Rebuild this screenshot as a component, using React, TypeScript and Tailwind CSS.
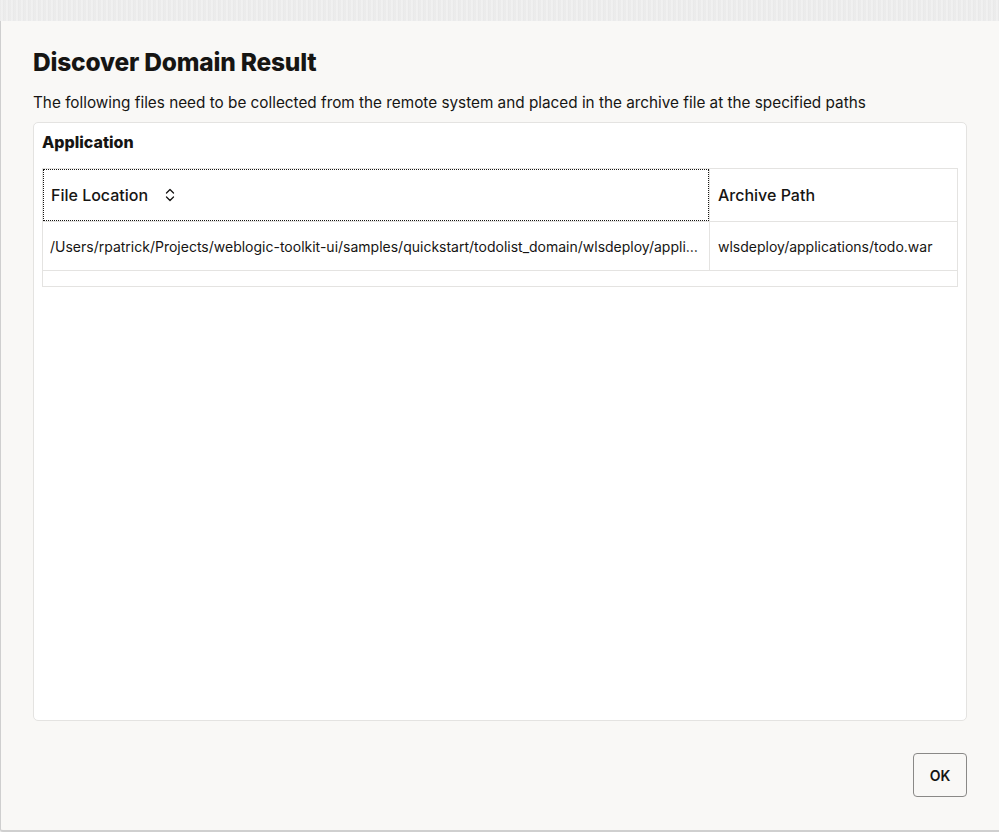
const font = "font-['Inter',_'Liberation_Sans',_sans-serif]";

function SortIcon() {
	return (
		<svg width="12" height="16" viewBox="0 0 12 16" fill="none" className="ml-[16px]">
			<path d="M2.5 6 L6 2.5 L9.5 6" stroke="#161513" strokeWidth="1.3" strokeLinecap="round" strokeLinejoin="round" />
			<path d="M2.5 10 L6 13.5 L9.5 10" stroke="#161513" strokeWidth="1.3" strokeLinecap="round" strokeLinejoin="round" />
		</svg>
	);
}

export default function App() {
	return (
		<div className={`${font} w-[999px] h-[832px] flex flex-col bg-[#ececec] text-[#161513]`}>
			<div className="h-[21px] shrink-0 bg-[repeating-linear-gradient(90deg,#e9e9e9_0px,#f3f3f3_2px,#e6e6e6_4px,#f1f1f1_5px)]" />
			<div className="flex-1 flex flex-col bg-[#f9f8f6] border-l border-b-2 border-[#cfcfcf] rounded-bl-[3px] pl-[32px] pr-[32px] pb-[33px]">
				<h1 className="mt-[26px] text-[24.5px] leading-[30px] font-extrabold tracking-[-0.2px]">
					Discover Domain Result
				</h1>
				<p className="mt-[14px] mb-[7px] text-[15.3px] leading-[24px]">
					The following files need to be collected from the remote system and placed in the archive file at the specified paths
				</p>
				<div className="h-[599px] bg-white border border-[#e4e3e1] rounded-[5px] px-[8px] pt-[8px]">
					<div className="text-[16px] leading-[22px] font-extrabold">Application</div>
					<div className="mt-[15px] border border-[#e4e3e1]">
						<div className="flex h-[53px] border-b border-[#e4e3e1] text-[16px] font-medium">
							<div className="w-[666px] shrink-0 flex items-center pl-[8px] outline outline-1 outline-dotted outline-[#161513] -outline-offset-1">
								File Location
								<SortIcon />
							</div>
							<div className="flex-1 flex items-center pl-[8px] border-l border-[#e4e3e1]">Archive Path</div>
						</div>
						<div className="flex h-[49px] border-b border-[#e4e3e1] text-[14px]">
							<div className="w-[666px] shrink-0 flex items-center pl-[7px] pr-[8px] min-w-0">
								<span className="truncate">
									/Users/rpatrick/Projects/weblogic-toolkit-ui/samples/quickstart/todolist_domain/wlsdeploy/applications/todo.war
								</span>
							</div>
							<div className="flex-1 flex items-center pl-[8px] border-l border-[#e4e3e1]">
								wlsdeploy/applications/todo.war
							</div>
						</div>
						<div className="h-[15px]" />
					</div>
				</div>
				<div className="mt-auto flex justify-end">
					<button className="w-[54px] h-[44px] rounded-[4px] border border-[#8a8987] bg-transparent text-[14px] font-semibold">
						OK
					</button>
				</div>
			</div>
		</div>
	);
}
